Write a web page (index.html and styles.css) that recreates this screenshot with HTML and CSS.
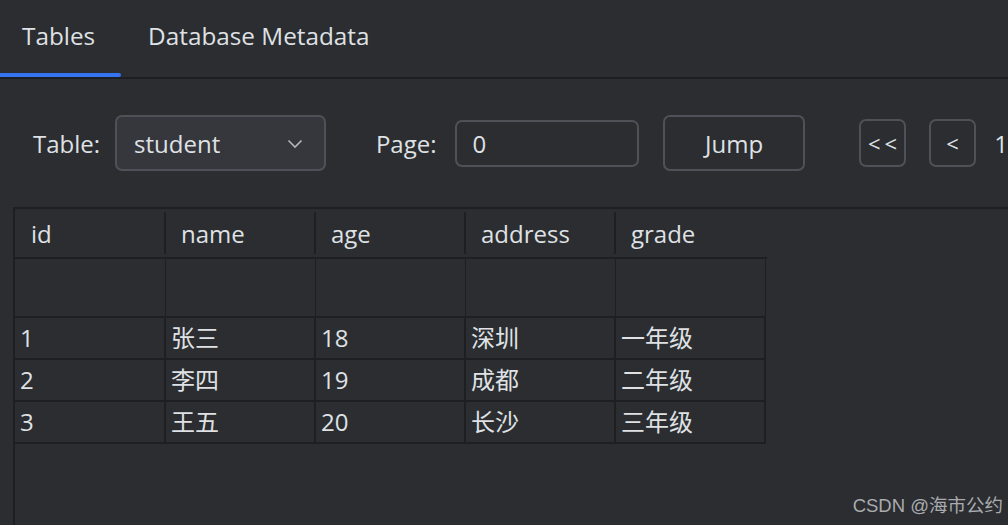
FILE: index.html
```html
<!DOCTYPE html>
<html>
<head>
<meta charset="utf-8">
<link rel="stylesheet" href="styles.css">
</head>
<body>
<div class="app">
  <div class="tabs">
    <div class="tab active">Tables</div>
    <div class="tab">Database Metadata</div>
  </div>
  <div class="toolbar">
    <span class="label">Table:</span>
    <div class="select"><span>student</span>
      <svg class="chev" width="16" height="10" viewBox="0 0 16 10"><path d="M1.5 1.5 L8 8 L14.5 1.5" fill="none" stroke="#b4b6bb" stroke-width="1.6"/></svg>
    </div>
    <span class="label page-label">Page:</span>
    <div class="input">0</div>
    <div class="btn jump">Jump</div>
    <div class="btn nav first">&lt;&lt;</div>
    <div class="btn nav prev">&lt;</div>
    <span class="label page-num">1</span>
  </div>
  <div class="panel">
    <div class="thead">
      <div class="th">id</div>
      <div class="th">name</div>
      <div class="th">age</div>
      <div class="th">address</div>
      <div class="th">grade</div>
    </div>
    <table class="grid">
      <tr class="empty"><td></td><td></td><td></td><td></td><td></td></tr>
      <tr><td>1</td><td>张三</td><td>18</td><td>深圳</td><td>一年级</td></tr>
      <tr><td>2</td><td>李四</td><td>19</td><td>成都</td><td>二年级</td></tr>
      <tr><td>3</td><td>王五</td><td>20</td><td>长沙</td><td>三年级</td></tr>
    </table>
  </div>
  <div class="watermark">CSDN @海市公约</div>
</div>
</body>
</html>
```
FILE: styles.css
```css
html, body {
  margin: 0;
  padding: 0;
  background: #2b2d30;
  height: 100%;
  overflow: hidden;
}
.app {
  position: relative;
  height: 525px;
  color: #dfe1e5;
  font-family: "Open Sans", "Noto Sans CJK SC", sans-serif;
  font-size: 24px;
}
.tabs {
  display: flex;
  height: 77px;
  border-bottom: 2px solid #1e1f22;
}
.tab {
  position: relative;
  padding: 19px 26px 0 22px;
  line-height: 34px;
  font-size: 24.3px;
}
.tab + .tab {
  padding-left: 27px;
}
.tab.active::after {
  content: "";
  position: absolute;
  left: 0;
  right: 0;
  bottom: 0;
  height: 4px;
  border-radius: 0 2px 2px 0;
  background: #3574f0;
}
.toolbar {
  display: flex;
  align-items: center;
  height: 56px;
  margin-top: 36px;
  padding-left: 33px;
}
.label {
  font-size: 24px;
}
.select {
  box-sizing: border-box;
  display: flex;
  align-items: center;
  justify-content: space-between;
  width: 214px;
  height: 56px;
  margin-left: 15px;
  padding: 0 21px 0 17px;
  border: 2px solid #4e5157;
  border-radius: 7px;
  background: #36373c;
}
.chev {
  margin-top: 2px;
}
.page-label {
  margin-left: 50px;
}
.input {
  box-sizing: border-box;
  display: flex;
  align-items: center;
  width: 188px;
  height: 47px;
  margin-left: 18px;
  padding-left: 16px;
  border: 2px solid #4e5157;
  border-radius: 7px;
}
.btn {
  box-sizing: border-box;
  display: flex;
  align-items: center;
  justify-content: center;
  border: 2px solid #4e5157;
  border-radius: 7px;
}
.jump {
  width: 144px;
  height: 56px;
  margin-left: 24px;
}
.nav {
  width: 48px;
  height: 48px;
  font-size: 22px;
}
.first {
  margin-left: 54px;
  letter-spacing: 4px;
  text-indent: 4px;
}
.prev {
  margin-left: 23px;
}
.page-num {
  margin-left: 18px;
}
.panel {
  margin: 36px 0 0 13px;
  height: 318px;
  border-top: 2px solid #1e1f22;
  border-left: 2px solid #1e1f22;
}
.thead {
  display: flex;
  width: 752px;
  height: 48px;
  border-bottom: 2px solid #1e1f22;
}
.th {
  position: relative;
  box-sizing: border-box;
  width: 150px;
  padding: 1px 0 0 16px;
  line-height: 48px;
}
.th + .th::before {
  content: "";
  position: absolute;
  left: -1px;
  top: 3px;
  bottom: 3px;
  width: 2px;
  background: #1e1f22;
}
.grid {
  border-collapse: collapse;
  table-layout: fixed;
  width: 750px;
}
.grid td {
  box-sizing: border-box;
  width: 150px;
  height: 42px;
  padding: 0 0 0 5px;
  border: 2px solid #1e1f22;
  border-left: none;
  line-height: 38px;
  font-size: 24px;
}
.grid tr.empty td {
  height: 58px;
  border-width: 1px;
  border-left: none;
  border-top: none;
  border-bottom-width: 2px;
}
.watermark {
  position: absolute;
  right: 5px;
  bottom: 8px;
  font-family: "Liberation Sans", "Noto Sans CJK SC", sans-serif;
  font-size: 18.5px;
  color: #a9abaf;
}
```
